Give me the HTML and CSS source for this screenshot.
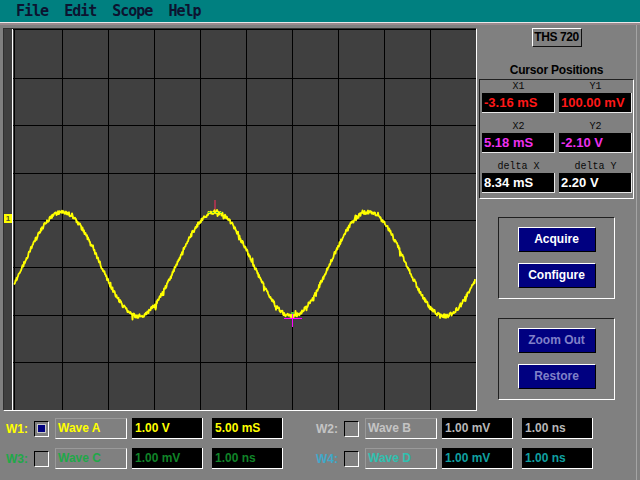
FILE: index.html
```html
<!DOCTYPE html>
<html>
<head>
<meta charset="utf-8">
<title>THS 720</title>
<link rel="stylesheet" href="styles.css">
</head>
<body>
<div class="app">
  <div class="menubar">
    <span class="menu-item">File</span>
    <span class="menu-item">Edit</span>
    <span class="menu-item">Scope</span>
    <span class="menu-item">Help</span>
  </div>
  <div class="menu-sep"></div>
  <div class="workspace">
    <div class="main">
      <div class="scope">
        <div class="marker-strip"><span class="marker">1</span></div>
        <div class="strip-sep"></div>
        <svg class="plot" width="463" height="381" viewBox="0 0 463 381">
          <rect width="463" height="381" fill="#404040"/>
          <g stroke="#000" stroke-width="1" shape-rendering="crispEdges">
            <line x1="1.5" y1="0" x2="1.5" y2="381"/>
            <line x1="49.5" y1="0" x2="49.5" y2="381"/>
            <line x1="95.5" y1="0" x2="95.5" y2="381"/>
            <line x1="141.5" y1="0" x2="141.5" y2="381"/>
            <line x1="187.5" y1="0" x2="187.5" y2="381"/>
            <line x1="233.5" y1="0" x2="233.5" y2="381"/>
            <line x1="279.5" y1="0" x2="279.5" y2="381"/>
            <line x1="325.5" y1="0" x2="325.5" y2="381"/>
            <line x1="371.5" y1="0" x2="371.5" y2="381"/>
            <line x1="417.5" y1="0" x2="417.5" y2="381"/>
            <line x1="0" y1="0.5" x2="463" y2="0.5"/>
            <line x1="0" y1="49.5" x2="463" y2="49.5"/>
            <line x1="0" y1="96.5" x2="463" y2="96.5"/>
            <line x1="0" y1="144.5" x2="463" y2="144.5"/>
            <line x1="0" y1="191.5" x2="463" y2="191.5"/>
            <line x1="0" y1="238.5" x2="463" y2="238.5"/>
            <line x1="0" y1="286.5" x2="463" y2="286.5"/>
            <line x1="0" y1="333.5" x2="463" y2="333.5"/>
          </g>
          <line x1="202" y1="171" x2="202" y2="182" stroke="#e03058" stroke-width="1.5" opacity="0.8"/>
          <polyline id="trace" points="" fill="none" stroke="#ffff00" stroke-width="1.8" stroke-linejoin="round"/>
          <line x1="195" y1="183.5" x2="209" y2="183.5" stroke="#50c040" stroke-width="1" stroke-dasharray="2 2"/>
          <line x1="279.5" y1="285" x2="279.5" y2="298" stroke="#ff00ff" stroke-width="1"/>
          <line x1="271" y1="289.5" x2="289" y2="289.5" stroke="#ff00ff" stroke-width="1"/>
          <rect x="278" y="283" width="3" height="2" fill="#50c040"/>
        </svg>
      </div>
      <div class="panel">
        <div class="model">THS 720</div>
        <div class="panel-title">Cursor Positions</div>
        <div class="cursor-group">
          <div class="cur-cell"><div class="cur-label">X1</div><div class="cur-value red">-3.16 mS</div></div>
          <div class="cur-cell"><div class="cur-label">Y1</div><div class="cur-value red">100.00 mV</div></div>
          <div class="cur-cell"><div class="cur-label">X2</div><div class="cur-value magenta">5.18 mS</div></div>
          <div class="cur-cell"><div class="cur-label">Y2</div><div class="cur-value magenta">-2.10 V</div></div>
          <div class="cur-cell"><div class="cur-label">delta X</div><div class="cur-value white">8.34 mS</div></div>
          <div class="cur-cell"><div class="cur-label">delta Y</div><div class="cur-value white">2.20 V</div></div>
        </div>
        <div class="btn-group acq-group">
          <div class="btn">Acquire</div>
          <div class="btn">Configure</div>
        </div>
        <div class="btn-group zoom-group">
          <div class="btn disabled">Zoom Out</div>
          <div class="btn disabled">Restore</div>
        </div>
      </div>
    </div>
    <div class="channels">
      <div class="chan ch1">
        <span class="chan-label">W1:</span>
        <span class="check on"><span class="tick"></span></span>
        <span class="name">Wave A</span>
        <span class="val val1">1.00 V</span>
        <span class="val val2">5.00 mS</span>
      </div>
      <div class="chan ch2">
        <span class="chan-label">W2:</span>
        <span class="check"></span>
        <span class="name">Wave B</span>
        <span class="val val1">1.00 mV</span>
        <span class="val val2">1.00 ns</span>
      </div>
      <div class="chan ch3">
        <span class="chan-label">W3:</span>
        <span class="check"></span>
        <span class="name">Wave C</span>
        <span class="val val1">1.00 mV</span>
        <span class="val val2">1.00 ns</span>
      </div>
      <div class="chan ch4">
        <span class="chan-label">W4:</span>
        <span class="check"></span>
        <span class="name">Wave D</span>
        <span class="val val1">1.00 mV</span>
        <span class="val val2">1.00 ns</span>
      </div>
    </div>
  </div>
</div>
<script src="script.js"></script>
</body>
</html>
```

FILE: styles.css
```css
* { box-sizing: border-box; margin: 0; padding: 0; }
html, body { width: 640px; height: 480px; overflow: hidden; }
body {
  background: #808080;
  font-family: "Liberation Sans", Arial, sans-serif;
  font-weight: bold;
  font-size: 12px;
  color: #000;
}
.app { width: 640px; height: 480px; }
.menubar {
  height: 22px;
  background: #008080;
  display: flex;
  gap: 16px;
  padding-left: 16px;
}
.menu-item {
  font-family: "DejaVu Sans Mono", monospace;
  font-weight: bold;
  font-size: 15px;
  letter-spacing: -1px;
  line-height: 22px;
  color: #0c1430;
}
.menu-sep {
  height: 3px;
  border-top: 1px solid #e8e8e8;
  background: #9a8a8e;
}
.workspace {
  width: 637px;
  height: 455px;
  border-right: 1px solid #a4a4a4;
}
.main { display: flex; padding-top: 3px; }
.scope {
  margin-left: 3px;
  width: 474px;
  height: 383px;
  display: flex;
  border: 1px solid;
  border-color: #303030 #fff #fff #303030;
  background: #404040;
}
.marker-strip { width: 8px; position: relative; }
.marker {
  position: absolute;
  left: 0;
  top: 185px;
  width: 8px;
  height: 9px;
  background: #ffff00;
  color: #505030;
  font-size: 8px;
  line-height: 9px;
  text-align: center;
}
.strip-sep { width: 1px; background: #fff; }
.plot { display: block; width: 463px; height: 381px; }

.panel {
  width: 160px;
  display: flex;
  flex-direction: column;
  align-items: center;
}
.model {
  width: 50px;
  height: 19px;
  border: 1px solid;
  border-color: #fff #101010 #101010 #fff;
  text-align: center;
  line-height: 17px;
  font-size: 12px;
  letter-spacing: -0.4px;
}
.panel-title {
  margin-top: 16px;
  line-height: 14px;
  font-size: 12px;
  letter-spacing: -0.2px;
}
.cursor-group {
  margin-top: 2px;
  width: 155px;
  border: 1px solid;
  border-color: #202020 #fff #fff #202020;
  padding: 0 1px 5px 2px;
  display: grid;
  grid-template-columns: 73px 73px;
  column-gap: 4px;
  row-gap: 7px;
}
.cur-label {
  font-family: "Liberation Mono", monospace;
  font-weight: normal;
  font-size: 10px;
  line-height: 13px;
  text-align: center;
  color: #0a0a0a;
}
.cur-value {
  height: 20px;
  background: #000;
  border-right: 1px solid #e8e8e8;
  border-bottom: 1px solid #e8e8e8;
  padding-left: 2px;
  line-height: 19px;
  font-size: 13px;
  white-space: nowrap;
}
.red { color: #ff1818; }
.magenta { color: #ee30ee; }
.white { color: #fff; }

.btn-group {
  width: 117px;
  height: 82px;
  border: 1px solid;
  border-color: #202020 #fff #fff #202020;
  display: flex;
  flex-direction: column;
  align-items: center;
  gap: 11px;
  padding-top: 9px;
}
.acq-group { margin-top: 18px; }
.zoom-group { margin-top: 19px; }
.btn {
  width: 78px;
  height: 25px;
  background: #000080;
  border: 1px solid;
  border-color: #fff #000 #000 #fff;
  color: #fff;
  font-size: 12px;
  line-height: 23px;
  text-align: center;
}
.btn.disabled { color: #8080c8; }

.channels {
  display: grid;
  grid-template-columns: 277px 277px;
  column-gap: 33px;
  row-gap: 9px;
  padding-left: 6px;
  margin-top: 7px;
}
.chan { display: flex; align-items: center; height: 21px; }
.chan-label { width: 28px; font-size: 12px; }
.check {
  width: 15px;
  height: 16px;
  border: 1px solid;
  border-color: #000 #fff #fff #000;
  display: flex;
  align-items: center;
  justify-content: center;
}
.tick {
  width: 9px;
  height: 9px;
  background: #000080;
  border: 1px solid #c8c8c8;
}
.name {
  margin-left: 6px;
  width: 72px;
  height: 21px;
  border: 1px solid;
  border-color: #9a9a9a #fff #fff #9a9a9a;
  padding-left: 2px;
  line-height: 19px;
  white-space: nowrap;
}
.val {
  width: 71px;
  height: 21px;
  background: #000;
  border-right: 1px solid #fff;
  border-bottom: 1px solid #fff;
  padding-left: 3px;
  line-height: 20px;
  white-space: nowrap;
}
.val1 { margin-left: 5px; }
.val2 { margin-left: 9px; }

.ch1 .chan-label, .ch1 .name, .ch1 .val { color: #ffff00; }
.ch2 .chan-label, .ch2 .name { color: #c4c4c4; }
.ch2 .val { color: #b8b8b8; }
.ch3 .chan-label, .ch3 .name { color: #20a848; }
.ch3 .val { color: #108428; }
.ch4 .chan-label { color: #40a8c8; }
.ch4 .name { color: #30c0b0; }
.ch4 .val { color: #10a0a0; }
```

FILE: script.js
```js
(function () {
  var trace = document.getElementById('trace');
  var seed = 20240611;
  function rnd() {
    seed = (seed * 1664525 + 1013904223) % 4294967296;
    return seed / 4294967296;
  }
  var pts = [];
  for (var x = 1; x <= 462; x += 0.5) {
    var ax = x + 13;
    var base = 235 - 52 * Math.cos(2 * Math.PI * (ax - 62) / 153);
    var n = (rnd() - 0.5) * 4;
    if (rnd() < 0.08) n += (rnd() - 0.5) * 9;
    pts.push(x.toFixed(1) + ',' + (base + n).toFixed(1));
  }
  trace.setAttribute('points', pts.join(' '));
})();
```
